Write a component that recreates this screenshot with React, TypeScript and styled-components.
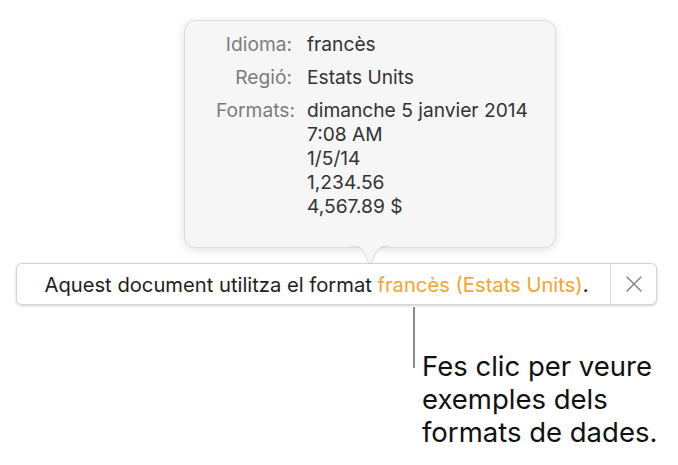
import React from "react";
import styled, { createGlobalStyle } from "styled-components";

const GlobalStyle = createGlobalStyle`
  html, body {
    margin: 0;
    padding: 0;
    background: #ffffff;
  }
  body {
    font-family: Inter, Roboto, "Liberation Sans", Arial, sans-serif;
    -webkit-font-smoothing: antialiased;
  }
`;

const Page = styled.div`
  width: 678px;
  height: 465px;
  overflow: hidden;
  padding-top: 20px;
  box-sizing: border-box;
`;

const Popover = styled.div`
  position: relative;
  z-index: 2;
  margin-left: 184px;
  width: 372px;
  height: 228px;
  box-sizing: border-box;
  padding: 11px 31px 0 31px;
  background: #f6f6f6;
  border: 1px solid rgba(0, 0, 0, 0.1);
  border-radius: 12px;
  box-shadow: 0 2px 10px rgba(0, 0, 0, 0.12);
`;

const InfoGrid = styled.div`
  display: grid;
  grid-template-columns: 76px 1fr;
  column-gap: 15px;
  row-gap: 9px;
  font-size: 19.2px;
  line-height: 24px;
`;

const Label = styled.div`
  text-align: right;
  color: #7c7c7c;
  white-space: nowrap;
`;

const Value = styled.div`
  color: #333333;
  white-space: nowrap;
`;

const ArrowWrap = styled.svg`
  position: absolute;
  left: 50%;
  top: calc(100% - 2px);
  margin-left: -20px;
  overflow: visible;
`;

const Bar = styled.div`
  position: relative;
  z-index: 1;
  display: flex;
  align-items: stretch;
  margin: 15px 0 0 16px;
  width: 641px;
  height: 42px;
  box-sizing: border-box;
  background: #ffffff;
  border: 1px solid #d4d4d4;
  border-radius: 6px;
  box-shadow: 0 1px 3px rgba(0, 0, 0, 0.18);
`;

const Message = styled.div`
  flex: 1;
  display: flex;
  align-items: center;
  justify-content: center;
  padding-left: 6px;
  font-size: 20.2px;
  color: #1e1e1e;
  white-space: nowrap;
`;

const LinkText = styled.span`
  color: #f5a431;
`;

const CloseButton = styled.div`
  width: 45px;
  display: flex;
  align-items: center;
  justify-content: center;
  border-left: 1px solid #e2e2e2;
`;

const Callout = styled.div`
  display: flex;
  margin-left: 413px;
  margin-top: 2px;
`;

const Leader = styled.div`
  width: 2px;
  height: 61px;
  background: #8c8c8c;
`;

const Caption = styled.div`
  margin-top: 43px;
  margin-left: 7px;
  font-size: 27.5px;
  line-height: 33px;
  color: #111111;
  white-space: nowrap;
`;

const rows: [string, string[]][] = [
  ["Idioma:", ["francès"]],
  ["Regió:", ["Estats Units"]],
  ["Formats:", ["dimanche 5 janvier 2014", "7:08 AM", "1/5/14", "1,234.56", "4,567.89 $"]],
];

function Arrow() {
  return (
    <ArrowWrap width="40" height="22" viewBox="0 0 40 22">
      <path
        d="M0 0 L0 1 C10 1 13 3 17.5 16 Q20 21 22.5 16 C27 3 30 1 40 1 L40 0 Z"
        fill="#f6f6f6"
      />
      <path
        d="M0 1 C10 1 13 3 17.5 16 Q20 21 22.5 16 C27 3 30 1 40 1"
        fill="none"
        stroke="rgba(0,0,0,0.12)"
        strokeWidth="1"
      />
    </ArrowWrap>
  );
}

export default function App() {
  return (
    <Page>
      <GlobalStyle />
      <Popover>
        <InfoGrid>
          {rows.map(([label, values]) => (
            <React.Fragment key={label}>
              <Label>{label}</Label>
              <Value>
                {values.map((v) => (
                  <div key={v}>{v}</div>
                ))}
              </Value>
            </React.Fragment>
          ))}
        </InfoGrid>
        <Arrow />
      </Popover>
      <Bar>
        <Message>
          Aquest document utilitza el format&nbsp;
          <LinkText>francès (Estats Units)</LinkText>.
        </Message>
        <CloseButton>
          <svg width="16" height="16" viewBox="0 0 16 16">
            <path d="M1 1 L15 15 M15 1 L1 15" stroke="#888" strokeWidth="1.6" strokeLinecap="round" />
          </svg>
        </CloseButton>
      </Bar>
      <Callout>
        <Leader />
        <Caption>
          Fes clic per veure
          <br />
          exemples dels
          <br />
          formats de dades.
        </Caption>
      </Callout>
    </Page>
  );
}
